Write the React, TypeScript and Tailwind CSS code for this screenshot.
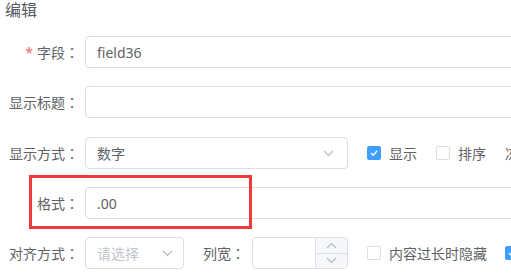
import React from "react";

const font = { fontFamily: '"Noto Sans", "Noto Sans CJK SC", sans-serif' };
const colonFont = { fontFamily: '"Noto Sans CJK JP", "Noto Sans CJK SC", sans-serif' };

function Chevron({ up = false, className = "" }: { up?: boolean; className?: string }) {
  return (
    <svg width="11" height="7" viewBox="0 0 11 7" className={className} fill="none">
      <polyline
        points={up ? "1,6 5.5,1.5 10,6" : "1,1 5.5,5.5 10,1"}
        stroke="#b4b8c0"
        strokeWidth="1.1"
      />
    </svg>
  );
}

function Checkbox({ checked = false, label }: { checked?: boolean; label?: string }) {
  return (
    <div className="flex items-center shrink-0">
      <span
        className={
          checked
            ? "w-[14px] h-[14px] rounded-[2px] bg-[#409eff] border border-[#409eff] flex items-center justify-center"
            : "w-[14px] h-[14px] rounded-[2px] bg-white border border-[#dcdfe6]"
        }
      >
        {checked && (
          <svg width="10" height="10" viewBox="0 0 10 10" fill="none">
            <polyline points="2,5 4.2,7.2 8.2,2.8" stroke="#fff" strokeWidth="1.3" />
          </svg>
        )}
      </span>
      {label && <span className="ml-[8px] text-[14px] text-[#606266] whitespace-nowrap">{label}</span>}
    </div>
  );
}

function Colon() {
  return <span style={colonFont}>：</span>;
}

function Label({ children, required = false }: { children: React.ReactNode; required?: boolean }) {
  return (
    <div className="w-[85px] shrink-0 pr-[6px] text-right text-[14px] text-[#606266] leading-[32px] whitespace-nowrap">
      {required && <span className="text-[#f56c6c] mr-[4px]">*</span>}
      {children}
      <Colon />
    </div>
  );
}

export default function App() {
  return (
    <div className="relative w-[511px] h-[274px] overflow-hidden bg-white" style={font}>
      <div className="pl-[5px] pt-0 text-[16px] leading-[20px] text-[#555a60]">编辑</div>

      <div className="mt-[16px] flex flex-col w-[700px]">
        <div className="flex items-center h-[32px]">
          <Label required>字段</Label>
          <div className="w-[500px] h-[32px] border border-[#dcdfe6] rounded-[4px] pl-[11px] flex items-center text-[14px] text-[#606266]">
            field36
          </div>
        </div>

        <div className="flex items-center h-[32px] mt-[18px]">
          <Label>显示标题</Label>
          <div className="w-[500px] h-[32px] border border-[#dcdfe6] rounded-[4px]" />
        </div>

        <div className="flex items-center h-[32px] mt-[19px]">
          <Label>显示方式</Label>
          <div className="w-[263px] h-[32px] border border-[#dcdfe6] rounded-[4px] pl-[11px] pr-[13px] flex items-center justify-between text-[14px] text-[#606266]">
            <span>数字</span>
            <Chevron />
          </div>
          <div className="ml-[19px] flex items-center">
            <Checkbox checked label="显示" />
            <div className="ml-[19px]">
              <Checkbox label="排序" />
            </div>
            <span className="ml-[19px] text-[14px] text-[#606266] whitespace-nowrap">冻结列</span>
          </div>
        </div>

        <div className="flex items-center h-[32px] mt-[18px]">
          <Label>格式</Label>
          <div className="w-[500px] h-[32px] border border-[#dcdfe6] rounded-[4px] pl-[11px] flex items-center text-[14px] text-[#606266]">
            .00
          </div>
        </div>

        <div className="flex items-center h-[32px] mt-[18px]">
          <Label>对齐方式</Label>
          <div className="w-[99px] h-[32px] border border-[#dcdfe6] rounded-[4px] pl-[11px] pr-[10px] flex items-center justify-between text-[14px] text-[#c0c4cc]">
            <span>请选择</span>
            <Chevron />
          </div>
          <div className="ml-[19px] w-[49px] pr-[7px] text-right text-[14px] text-[#606266] whitespace-nowrap">
            列宽<Colon />
          </div>
          <div className="w-[96px] h-[32px] border border-[#dcdfe6] rounded-[4px] flex overflow-hidden">
            <div className="flex-1" />
            <div className="w-[32px] border-l border-[#dcdfe6] bg-[#f5f7fa] flex flex-col">
              <div className="flex-1 flex items-center justify-center border-b border-[#dcdfe6]">
                <Chevron up />
              </div>
              <div className="flex-1 flex items-center justify-center">
                <Chevron />
              </div>
            </div>
          </div>
          <div className="ml-[19px] flex items-center">
            <Checkbox label="内容过长时隐藏" />
            <div className="ml-[18px]">
              <Checkbox checked label="显示" />
            </div>
          </div>
        </div>
      </div>

      <div className="absolute left-[29px] top-[175px] w-[223px] h-[54px] border-[3px] border-[#f03a3a]" />
    </div>
  );
}
